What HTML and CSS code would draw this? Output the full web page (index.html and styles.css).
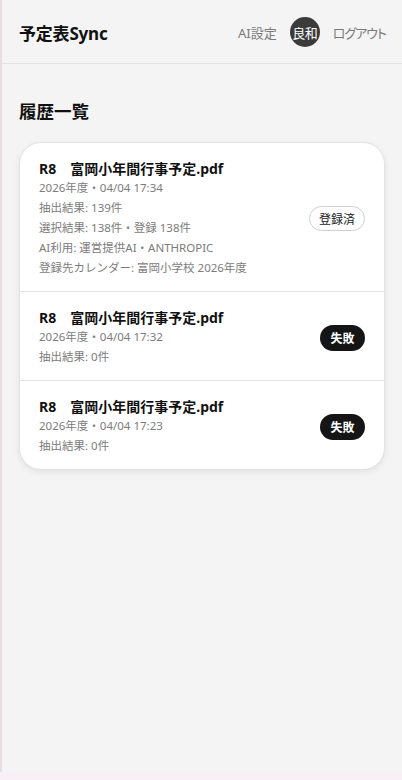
FILE: index.html
```html
<!DOCTYPE html>
<html lang="ja">
<head>
<meta charset="utf-8">
<title>予定表Sync</title>
<link rel="stylesheet" href="styles.css">
</head>
<body>
<div class="app">
  <header class="topbar">
    <div class="brand">予定表Sync</div>
    <nav class="nav">
      <a class="nav-link">AI設定</a>
      <span class="avatar">良和</span>
      <a class="nav-link kana">ログアウト</a>
    </nav>
  </header>
  <main class="main">
    <h1 class="page-title">履歴一覧</h1>
    <section class="card">
      <div class="row">
        <div class="info">
          <div class="file">R8　富岡小年間行事予定.pdf</div>
          <div class="meta">2026年度・04/04 17:34</div>
          <div class="meta">抽出結果: 139件</div>
          <div class="meta">選択結果: 138件・登録 138件</div>
          <div class="meta">AI利用: 運営提供AI・ANTHROPIC</div>
          <div class="meta">登録先カレンダー: 富岡小学校 2026年度</div>
        </div>
        <span class="badge badge-done">登録済</span>
      </div>
      <div class="row">
        <div class="info">
          <div class="file">R8　富岡小年間行事予定.pdf</div>
          <div class="meta">2026年度・04/04 17:32</div>
          <div class="meta">抽出結果: 0件</div>
        </div>
        <span class="badge badge-fail">失敗</span>
      </div>
      <div class="row">
        <div class="info">
          <div class="file">R8　富岡小年間行事予定.pdf</div>
          <div class="meta">2026年度・04/04 17:23</div>
          <div class="meta">抽出結果: 0件</div>
        </div>
        <span class="badge badge-fail">失敗</span>
      </div>
    </section>
  </main>
</div>
</body>
</html>
```

FILE: styles.css
```css
html {
  background: #f8f0f7;
}
body {
  margin: 0;
  padding-bottom: 8px;
  font-family: "Noto Sans", "Noto Sans CJK JP", sans-serif;
  color: #111;
}
.app {
  height: 772px;
  background: #f4f4f4;
  border-left: 2px solid #e6dee5;
  box-sizing: border-box;
}
.topbar {
  height: 64px;
  box-sizing: border-box;
  border-bottom: 1px solid #e2e2e2;
  display: flex;
  align-items: center;
  justify-content: space-between;
  padding: 1px 16px 0 17px;
}
.brand {
  font-size: 17px;
  font-weight: 700;
  letter-spacing: -0.2px;
}
.nav {
  display: flex;
  align-items: center;
  gap: 13px;
}
.nav-link {
  font-size: 13px;
  color: #7a7a7a;
}
.kana {
  font-feature-settings: "palt";
  letter-spacing: -1px;
}
.avatar {
  width: 30px;
  height: 30px;
  border-radius: 50%;
  background: #3b3b3b;
  color: #fff;
  font-size: 13px;
  display: flex;
  align-items: center;
  justify-content: center;
  letter-spacing: -0.5px;
}
.main {
  padding: 34px 17px 0 17px;
}
.page-title {
  margin: 0 0 18px 0;
  font-size: 17.5px;
  font-weight: 700;
  line-height: 26px;
}
.card {
  background: #fff;
  border: 1px solid #e3e3e3;
  border-radius: 22px;
  box-shadow: 0 2px 6px rgba(0, 0, 0, 0.08);
  overflow: hidden;
}
.row {
  display: flex;
  align-items: center;
  justify-content: space-between;
  padding: 16px 19px 13px 19px;
  border-top: 1px solid #e6e6e6;
}
.row:first-child {
  border-top: none;
}
.file {
  font-size: 14px;
  font-weight: 700;
  line-height: 19px;
  color: #111;
}
.meta {
  font-size: 11.5px;
  line-height: 20px;
  color: #7c7c7c;
}
.badge {
  font-size: 12px;
  border-radius: 999px;
  white-space: nowrap;
  display: inline-flex;
  align-items: center;
  justify-content: center;
}
.badge-done {
  height: 25px;
  padding: 0 10px;
  border: 1px solid #cfcfcf;
  box-sizing: border-box;
  color: #222;
  width: 56px;
}
.badge-fail {
  height: 26px;
  width: 45px;
  background: #151515;
  color: #fff;
  font-weight: 700;
}
```
